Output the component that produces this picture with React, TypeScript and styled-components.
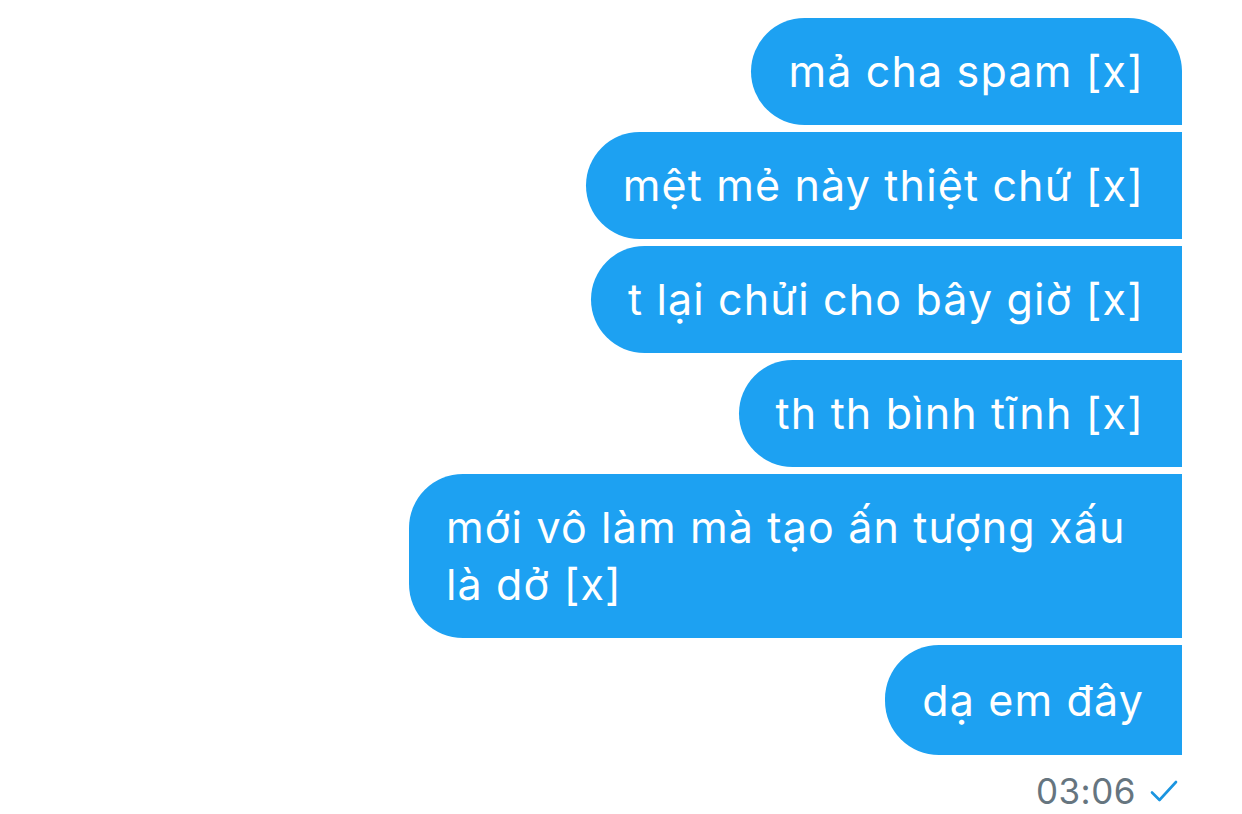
import React from "react";
import styled, {createGlobalStyle} from "styled-components";

const Global = createGlobalStyle`
    html, body {
        margin: 0;
        padding: 0;
        background: #ffffff;
    }
    body {
        font-family: Inter, "Noto Sans", "DejaVu Sans", sans-serif;
        -webkit-font-smoothing: antialiased;
    }
`;

let Thread = styled.div`
    width: 1242px;
    height: 814px;
    box-sizing: border-box;
    padding: 18px 60px 0 0;
    display: flex;
    flex-direction: column;
    align-items: flex-end;
    gap: 7px;
    overflow: hidden;
`;

let Bubble = styled.div<{first?: boolean; last?: boolean}>`
    background: #1da1f2;
    color: #ffffff;
    font-size: 43px;
    line-height: 57px;
    letter-spacing: 1.15px;
    padding: ${props => props.last ? "27px 38px 26px 37px" : "25px 38px 25px 37px"};
    max-width: 773px;
    border-radius: ${props => props.first ? "54px 54px 0 54px" : "54px 0 0 54px"};
    box-sizing: border-box;
`;

let Meta = styled.div`
    display: flex;
    align-items: center;
    gap: 14px;
    margin-top: 8px;
    margin-right: 4px;
    color: #66757f;
    font-size: 35px;
    letter-spacing: 0.5px;
`;

let Check = () => (
    <svg width="28" height="24" viewBox="0 0 28 24" fill="none">
        <path d="M2 13.5 L9.5 21 L26 3" stroke="#1b95e0" strokeWidth="2.6" strokeLinecap="round" strokeLinejoin="round"/>
    </svg>
);

const messages = [
    "mả cha spam [x]",
    "mệt mẻ này thiệt chứ [x]",
    "t lại chửi cho bây giờ [x]",
    "th th bình tĩnh [x]",
    "mới vô làm mà tạo ấn tượng xấu là dở [x]",
    "dạ em đây",
];

export default function App() {
    return (
        <>
            <Global/>
            <Thread>
                {messages.map((m, i) => (
                    <Bubble key={i} first={i === 0} last={i === messages.length - 1}>{m}</Bubble>
                ))}
                <Meta>03:06 <Check/></Meta>
            </Thread>
        </>
    );
}
